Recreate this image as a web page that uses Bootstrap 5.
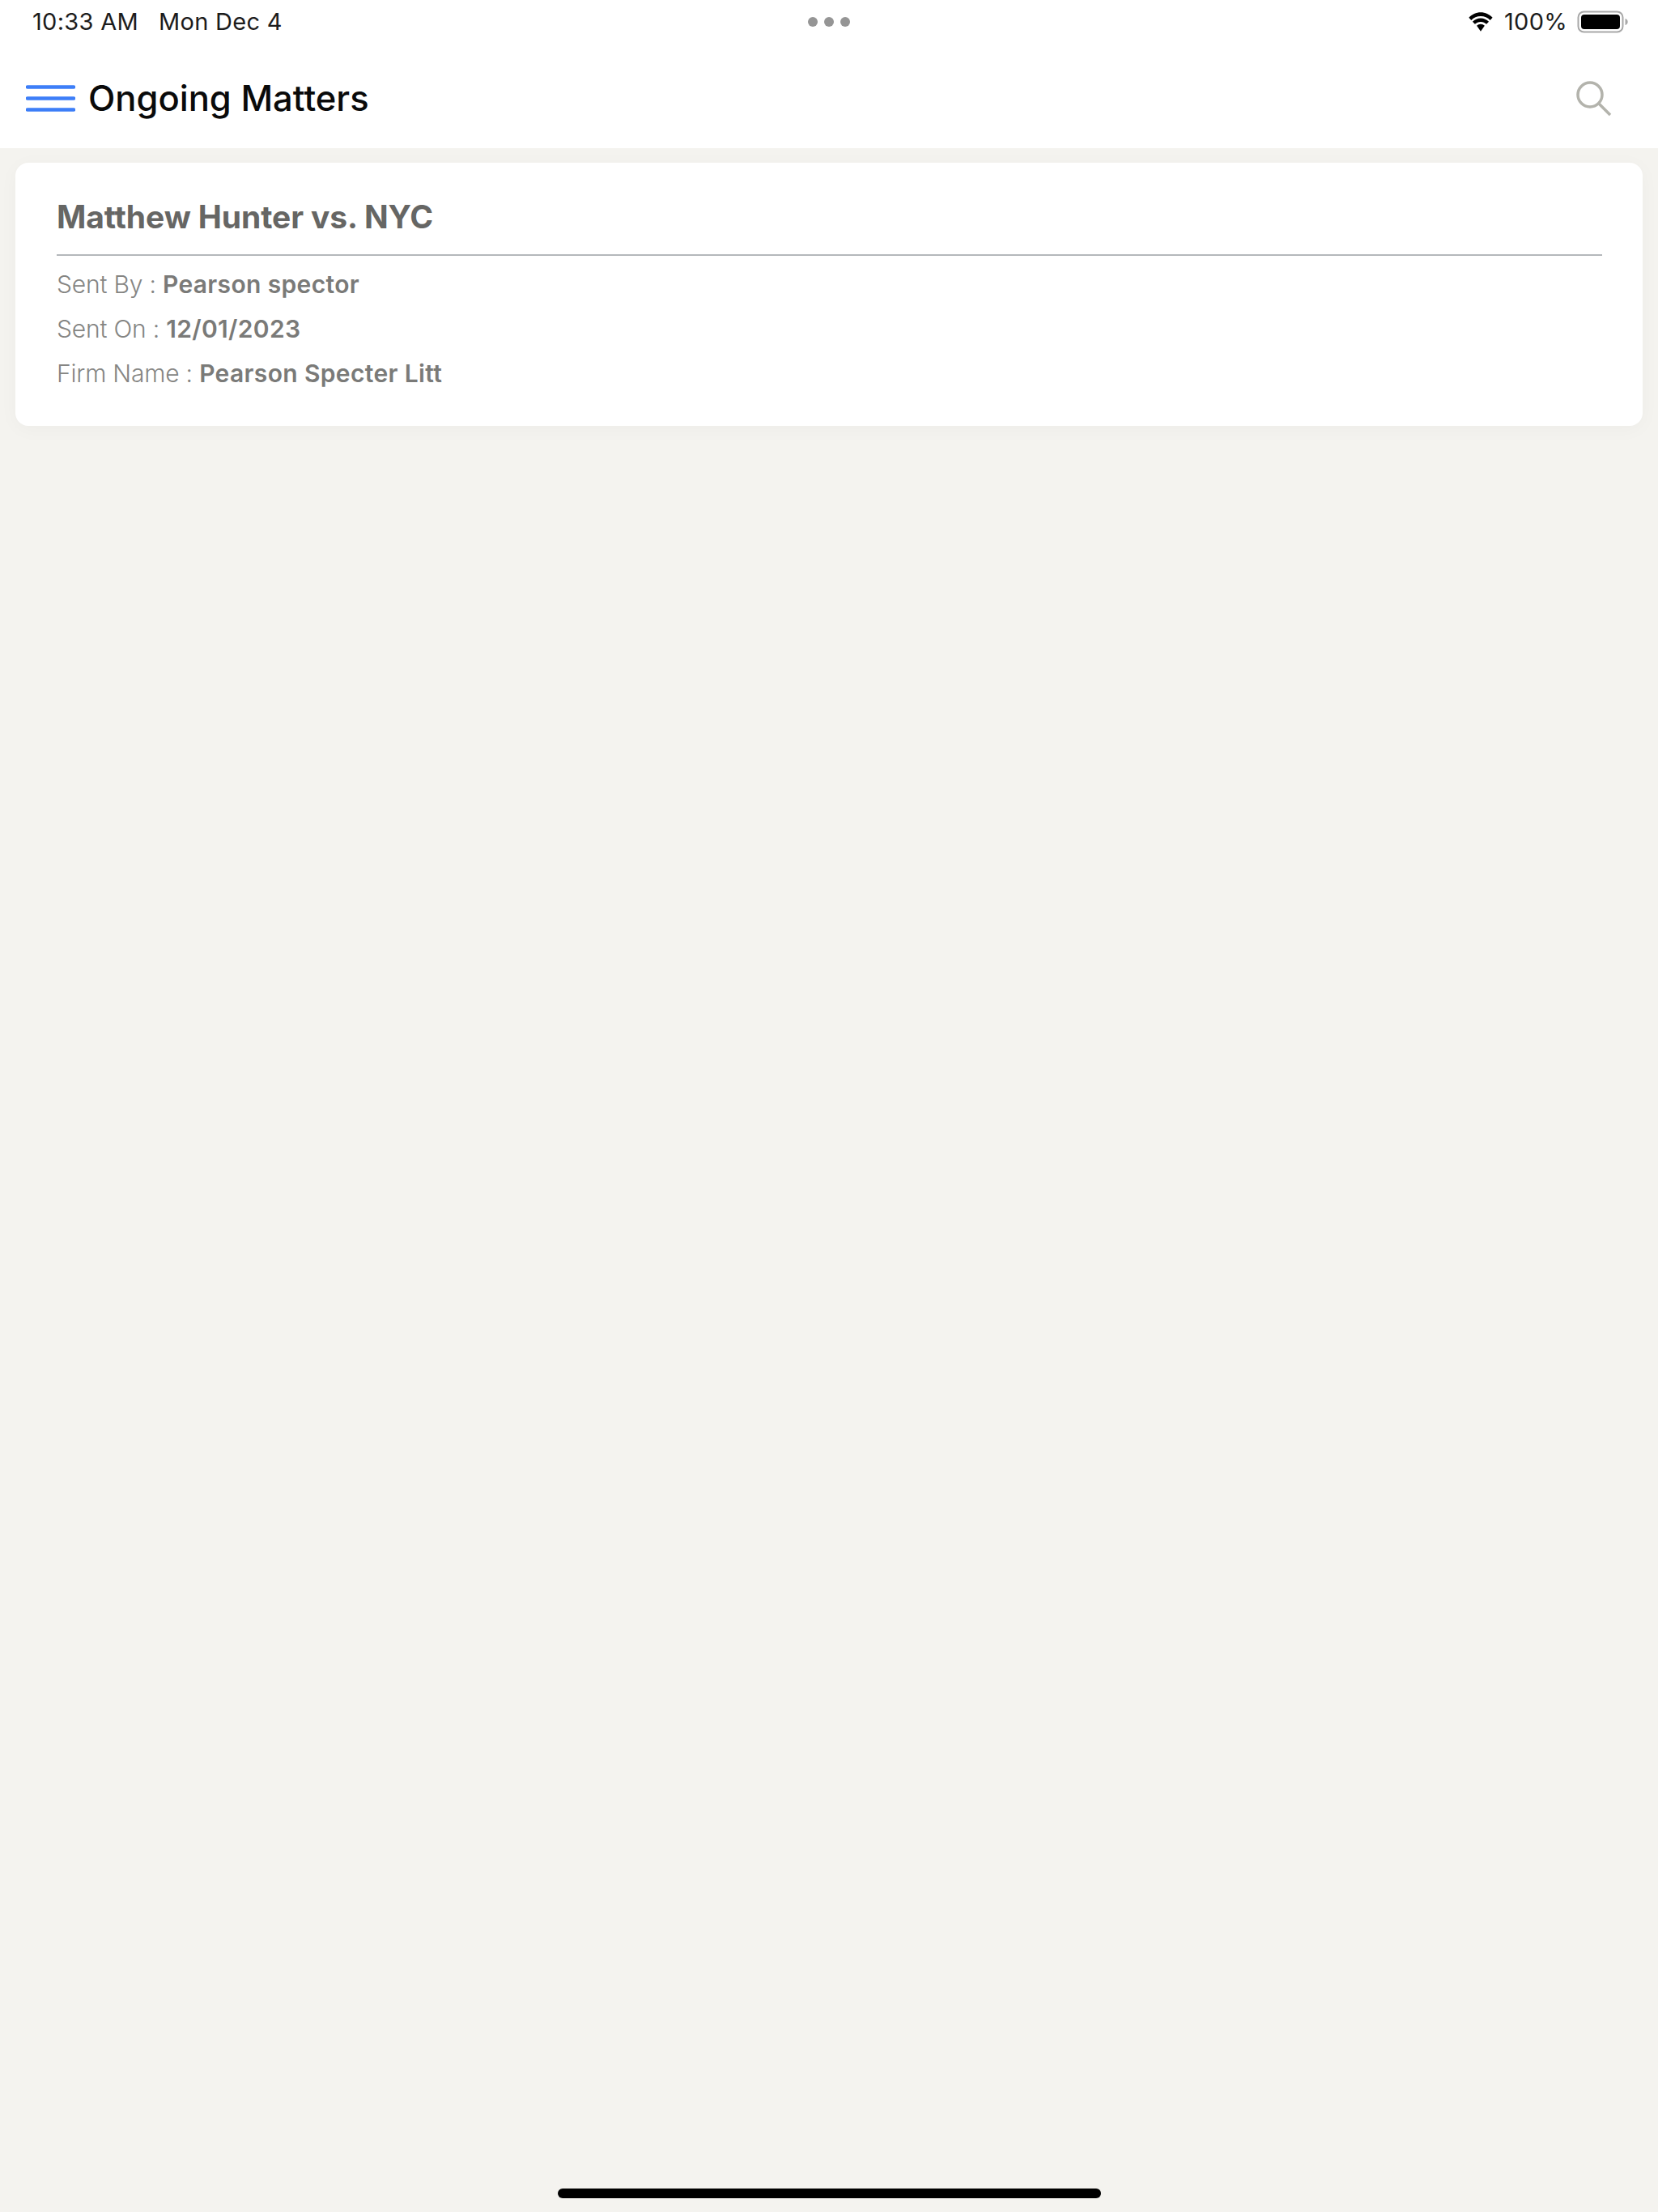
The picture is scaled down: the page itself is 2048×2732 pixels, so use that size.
<!DOCTYPE html>
<html lang="en">
<head>
  <meta charset="UTF-8">
  <meta name="viewport" content="width=device-width, initial-scale=1.0">
  <title>Ongoing Matters</title>
  <link href="https://cdn.jsdelivr.net/npm/bootstrap@5.3.2/dist/css/bootstrap.min.css" rel="stylesheet">
  <style>
    body { background-color: #f4f3ef; font-family: Inter, "Liberation Sans", sans-serif; }
    .app-page { height: 2732px; overflow: hidden; }
    .app-top { height: 183px; background: #fff; }
    .status-row { height: 54px; padding: 0 37px 0 40px; font-size: 29px; letter-spacing: .3px; color: #1c1c1c; }
    .status-side { flex: 1 1 0; }
    .status-date { margin-left: 25px; }
    .status-pct { margin: 0 12px 0 11px; }
    .dots { gap: 8px; margin-left: -3px; }
    .dots i { display: block; width: 12px; height: 12px; border-radius: 50%; background: #959595; }
    .title-row { height: 129px; padding: 6px 57px 0 32px; }
    .burger { width: 61px; height: 33px; }
    .page-title { font-size: 43.500px; font-weight: 500; color: #0a0a0a; margin: 0 0 0 16px; line-height: 1; }
    .matter-card { margin: 18px 19px 0; height: 325px; padding: 44px 50px 0 51px; border: 0; border-radius: 16px; box-shadow: 0 4px 24px rgba(0, 0, 0, .03); }
    .matter-title { font-size: 39px; font-weight: 700; color: #666664; line-height: 46px; margin: 0; letter-spacing: -.1px; }
    .matter-rule { border: 0; border-top: 2px solid #b4b8bb; opacity: 1; margin: 23px 0 8px; }
    .matter-line { font-size: 30px; line-height: 55px; color: #858583; margin: 0; font-weight: 300; letter-spacing: -.2px; }
    .matter-line b { font-weight: 600; color: #7a7a78; letter-spacing: .35px; }
    .home-bar { width: 671px; height: 12px; background: #000; border-radius: 6px; margin: 0 auto 17px; }
  </style>
</head>
<body>
  <div class="app-page d-flex flex-column">
    <header class="app-top">
      <div class="status-row d-flex align-items-center">
        <div class="status-side d-flex"><span>10:33 AM</span><span class="status-date">Mon Dec 4</span></div>
        <div class="dots d-flex"><i></i><i></i><i></i></div>
        <div class="status-side d-flex justify-content-end align-items-center">
          <svg width="36" height="26" viewBox="0 0 34 24"><path d="M17 5.500c4.300 0 8.200 1.700 11 4.500l2.800-3C27.200 3.400 22.300 1 17 1S6.800 3.400 3.200 7L6 10c2.800-2.800 6.700-4.500 11-4.500z" fill="#000"/><path d="M17 12c2.600 0 5 1 6.700 2.700l2.800-3C24 9.200 20.700 7.700 17 7.700s-7 1.500-9.500 4l2.800 3C12 13 14.400 12 17 12z" fill="#000"/><path d="M17 14.500c-1.800 0-3.400.7-4.600 1.900L17 23l4.600-6.600c-1.200-1.200-2.800-1.900-4.600-1.900z" fill="#000"/></svg>
          <span class="status-pct">100%</span>
          <svg width="63" height="28" viewBox="0 0 63 28"><rect x="1.500" y="1.500" width="55" height="25" rx="7" fill="none" stroke="#a8a8a8" stroke-width="2"/><rect x="5" y="5" width="48" height="18" rx="4" fill="#000"/><path d="M59.500 10c2 .5 3.200 2.100 3.200 4s-1.200 3.500-3.200 4z" fill="#a8a8a8"/></svg>
        </div>
      </div>
      <div class="title-row d-flex align-items-center">
        <svg class="burger" viewBox="0 0 61 33"><g stroke="#3d7ef8" stroke-width="4.500" stroke-linecap="round"><path d="M2 2.500h57M2 16.500h57M2 30.500h57"/></g></svg>
        <h1 class="page-title flex-grow-1">Ongoing Matters</h1>
        <svg width="44" height="44" viewBox="0 0 44 44" fill="none" stroke="#b3b3ac" stroke-width="3.500"><circle cx="17" cy="17" r="15"/><path d="M27.500 27.500 42 42"/></svg>
      </div>
    </header>
    <main class="flex-grow-1">
      <div class="card matter-card">
        <h2 class="matter-title">Matthew Hunter vs. NYC</h2>
        <hr class="matter-rule">
        <p class="matter-line">Sent By : <b>Pearson spector</b></p>
        <p class="matter-line">Sent On : <b>12/01/2023</b></p>
        <p class="matter-line">Firm Name : <b>Pearson Specter Litt</b></p>
      </div>
    </main>
    <div class="home-bar"></div>
  </div>
  <script src="https://cdn.jsdelivr.net/npm/bootstrap@5.3.2/dist/js/bootstrap.bundle.min.js"></script>
</body>
</html>
